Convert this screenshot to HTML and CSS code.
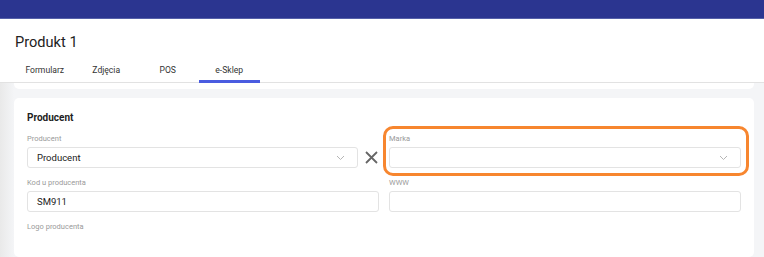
FILE: index.html
```html
<!DOCTYPE html>
<html lang="pl">
<head>
<meta charset="utf-8">
<link rel="stylesheet" href="styles.css">
</head>
<body>
<div class="topbar"></div>
<header class="header">
  <h1 class="title">Produkt 1</h1>
  <nav class="tabs">
    <div class="tab">Formularz</div>
    <div class="tab">Zdjęcia</div>
    <div class="tab">POS</div>
    <div class="tab active">e-Sklep</div>
  </nav>
</header>
<main class="content">
  <div class="prev-card"></div>
  <section class="card">
    <h2 class="card-title">Producent</h2>
    <div class="grid">
      <div class="field">
        <div class="label">Producent</div>
        <div class="with-clear">
          <div class="select">
            <span class="value">Producent</span>
            <svg class="chev" width="9" height="6" viewBox="0 0 9 6"><path d="M1 1l3.5 3.5L8 1" fill="none" stroke="#b5b5b5" stroke-width="1"/></svg>
          </div>
          <svg class="clear" width="13" height="13" viewBox="0 0 13 13"><path d="M1 1l11 11M12 1L1 12" stroke="#666" stroke-width="1.8"/></svg>
        </div>
      </div>
      <div class="field highlighted">
        <div class="label">Marka</div>
        <div class="select">
          <span class="value"></span>
          <svg class="chev" width="9" height="6" viewBox="0 0 9 6"><path d="M1 1l3.5 3.5L8 1" fill="none" stroke="#b5b5b5" stroke-width="1"/></svg>
        </div>
        <div class="ring"></div>
      </div>
      <div class="field">
        <div class="label">Kod u producenta</div>
        <div class="input"><span class="value">SM911</span></div>
      </div>
      <div class="field">
        <div class="label">WWW</div>
        <div class="input"><span class="value"></span></div>
      </div>
      <div class="field">
        <div class="label">Logo producenta</div>
      </div>
    </div>
  </section>
</main>
</body>
</html>
```
FILE: styles.css
```css
* { box-sizing: border-box; }
html, body { margin: 0; height: 100%; }
body {
  font-family: Roboto, "Liberation Sans", sans-serif;
  background: #f4f5f7;
  overflow: hidden;
  color: #333;
}
.topbar {
  height: 19px;
  background: #2b3590;
  border-bottom: 1px solid #5560a8;
}
.header {
  background: #fff;
  border-bottom: 1px solid #e2e2e2;
  height: 64px;
  padding-left: 14px;
}
.title {
  margin: 0;
  padding-top: 13px;
  padding-left: 1px;
  font-size: 14.6px;
  font-weight: 400;
  line-height: 20px;
  color: #222;
}
.tabs {
  display: flex;
  margin-top: 11px;
}
.tab {
  width: 61.5px;
  text-align: center;
  font-size: 8.6px;
  line-height: 14px;
  height: 20px;
  color: #333;
}
.tab.active {
  border-bottom: 3px solid #4a5ce0;
  height: 20px;
}
.content {
  padding: 0 10px 0 14px;
  background: linear-gradient(to right, #e9e9e9 0, #f4f5f7 14px);
  height: 180px;
}
.prev-card {
  height: 6px;
  background: #fff;
  border-radius: 0 0 5px 5px;
}
.card {
  margin-top: 9px;
  background: #fff;
  border-radius: 5px;
  padding: 13px 13px 0;
  height: 159px;
}
.card-title {
  margin: 0;
  font-size: 10px;
  font-weight: 700;
  line-height: 14px;
  color: #222;
}
.grid {
  display: grid;
  grid-template-columns: 352px 352px;
  column-gap: 10px;
  row-gap: 9px;
  margin-top: 8px;
}
.field { position: relative; }
.label {
  font-size: 7.5px;
  line-height: 11px;
  color: #9a9a9a;
  margin-bottom: 3px;
}
.with-clear {
  display: flex;
  align-items: center;
  gap: 7px;
}
.with-clear .select { width: 331px; }
.select, .input {
  height: 21px;
  border: 1px solid #e3e3e3;
  border-radius: 3px;
  display: flex;
  align-items: center;
  justify-content: space-between;
  padding: 0 12px 0 9px;
  background: #fff;
}
.value {
  font-size: 9.5px;
  color: #222;
}
.chev { display: block; }
.clear { display: block; flex: none; }
.ring {
  position: absolute;
  left: -6px;
  right: -8px;
  top: -7px;
  bottom: -8px;
  border: 3px solid #f7862f;
  border-radius: 10px;
  pointer-events: none;
}
```
